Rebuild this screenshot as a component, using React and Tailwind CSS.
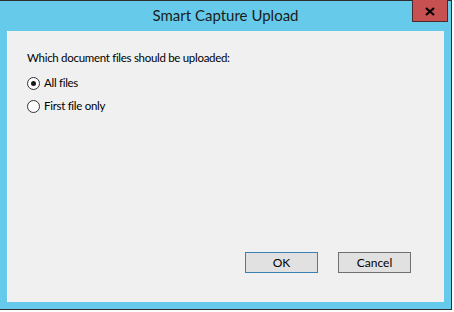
import React, { useState } from 'react';

const Radio = ({ checked, label, onClick }) => (
  <label className="flex items-center h-[16px] cursor-default" onClick={onClick}>
    <span className="w-[13px] h-[13px] rounded-full border border-[#333333] bg-white flex items-center justify-center">
      {checked && <span className="w-[5px] h-[5px] rounded-full bg-[#1a1a1a]" />}
    </span>
    <span className="ml-[4px]">{label}</span>
  </label>
);

export default function App() {
  const [choice, setChoice] = useState('all');

  return (
    <div className="w-[452px] h-[310px] bg-[#66cbea] border-t border-r border-b border-[#2e2e2e] px-[7px] pb-[7px] flex flex-col font-['Lato',sans-serif] text-[11.5px] tracking-[-0.3px] text-black">
      {/* title bar */}
      <div className="relative h-[30px] shrink-0 flex items-center justify-center">
        <span className="text-[15px] tracking-normal text-[#1b1b1b] mb-[1px]">Smart Capture Upload</span>
        <button className="absolute top-[-1px] right-[-4px] w-[36px] h-[22px] bg-[#c75050] border border-[#4a2a2a] border-t-0 flex items-center justify-center">
          <svg width="10" height="9" viewBox="0 0 10 9" className="mt-[1px]">
            <path d="M1 1l8 7M9 1L1 8" stroke="#000" strokeWidth="2.2" />
          </svg>
        </button>
      </div>

      {/* client area */}
      <div className="flex-1 bg-[#f0f0f0] border-l border-white flex flex-col pl-[19px] pr-[33px]">
        <div className="mt-[19px] h-[16px] leading-[16px]">Which document files should be uploaded:</div>
        <div className="mt-[9px] flex flex-col gap-[7px]">
          <Radio checked={choice === 'all'} label="All files" onClick={() => setChoice('all')} />
          <Radio checked={choice === 'first'} label="First file only" onClick={() => setChoice('first')} />
        </div>
        <div className="mt-auto mb-[29px] flex justify-end gap-[20px]">
          <button className="w-[73px] h-[21px] bg-[#e1e1e1] border border-[#3c7fb1] text-[12px] tracking-normal">OK</button>
          <button className="w-[73px] h-[21px] bg-[#e1e1e1] border border-[#707070] text-[12px] tracking-normal">Cancel</button>
        </div>
      </div>
    </div>
  );
}
